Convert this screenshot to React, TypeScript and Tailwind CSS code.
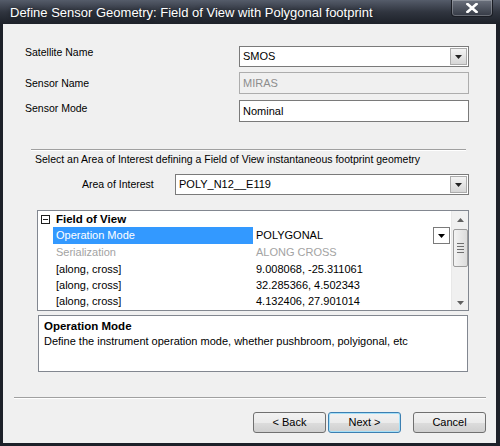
import React from 'react';

const font = { fontFamily: '"Liberation Sans", Arial, sans-serif' };

const Arrow: React.FC<{ className?: string }> = ({ className }) => (
  <svg width="7" height="4" viewBox="0 0 7 4" className={className}>
    <path d="M0 0h7L3.5 4z" fill="currentColor" />
  </svg>
);

const Combo: React.FC<{ value: string; width: string }> = ({ value, width }) => (
  <div className={`${width} h-[21px] bg-white border border-[#7a7a7a] flex items-stretch`}>
    <div className="flex-1 pl-[3px] flex items-center text-[11px] text-black">{value}</div>
    <div className="w-[17px] m-[1px] border border-[#acacac] bg-gradient-to-b from-[#f4f4f4] to-[#d6d6d6] flex items-center justify-center text-[#222]">
      <Arrow />
    </div>
  </div>
);

const Separator: React.FC<{ className: string }> = ({ className }) => (
  <div className={`${className} h-[2px] flex flex-col`}>
    <div className="h-[1px] bg-[#a0a0a0]" />
    <div className="h-[1px] bg-white" />
  </div>
);

const WinButton: React.FC<{ label: string; isDefault?: boolean }> = ({ label, isDefault }) => (
  <div
    className={`w-[73px] h-[21px] rounded-[3px] border ${
      isDefault ? 'border-[#3c7fb1] shadow-[inset_0_0_0_1px_#a6e0f8]' : 'border-[#707070]'
    } bg-[linear-gradient(#f2f2f2_0%,#ebebeb_50%,#dddddd_50%,#cfcfcf_100%)] flex items-center justify-center text-[11px] text-black`}
  >
    {label}
  </div>
);

const rows = [
  { label: 'Serialization', value: 'ALONG CROSS', disabled: true },
  { label: '[along, cross]', value: '9.008068, -25.311061' },
  { label: '[along, cross]', value: '32.285366, 4.502343' },
  { label: '[along, cross]', value: '4.132406, 27.901014' },
];

export default function App() {
  return (
    <div className="w-[500px] h-[446px] bg-[#1d2129] flex flex-col overflow-hidden" style={font}>
      {/* Title bar */}
      <div className="h-[24px] flex items-start justify-between bg-gradient-to-b from-[#555c6a] via-[#30353f] to-[#1d2129]">
        <div className="pl-[10px] pt-[5px] text-[13px] leading-[15px] text-white [text-shadow:0_0_4px_rgba(0,0,0,0.6)]">
          Define Sensor Geometry: Field of View with Polygonal footprint
        </div>
        <div className="mr-[7px] w-[42px] h-[17px] rounded-b-[4px] border border-t-0 border-[#1a1d24] bg-gradient-to-b from-[#6b717d] to-[#353a45] shadow-[inset_0_0_0_1px_rgba(255,255,255,0.25)] flex items-center justify-center">
          <svg width="12" height="10" viewBox="0 0 12 10">
            <path d="M1.5 1 10.5 9M10.5 1 1.5 9" stroke="white" strokeWidth="2.6" strokeLinecap="square" />
          </svg>
        </div>
      </div>

      {/* Client area */}
      <div className="flex-1 ml-[3px] mr-[4px] mb-[3px] bg-[#f0f0f0] flex flex-col text-[11px] leading-[13px] text-black">
        <div className="mt-[22px] flex items-start text-[10.5px]">
          <div className="ml-[22px] w-[214px]">Satellite Name</div>
          <Combo value="SMOS" width="w-[230px]" />
        </div>

        <div className="mt-[5px] flex items-start">
          <div className="ml-[22px] w-[214px] pt-[5px] text-[10.5px]">Sensor Name</div>
          <div className="w-[230px] h-[22px] border border-[#adadad] bg-[#f0f0f0] pl-[3px] flex items-center text-[#8d8d8d]">MIRAS</div>
        </div>

        <div className="mt-[6px] flex items-start">
          <div className="ml-[22px] w-[214px] pt-[2px] text-[10.5px]">Sensor Mode</div>
          <div className="w-[230px] h-[22px] border border-[#7a7a7a] bg-white pl-[3px] flex items-center">Nominal</div>
        </div>

        <Separator className="mt-[27px] ml-[28px] w-[435px]" />

        <div className="mt-[2px] ml-[32px] text-[10.5px]">Select an Area of Interest defining a Field of View instantaneous footprint geometry</div>

        <div className="mt-[8px] flex items-center">
          <div className="ml-[79px] w-[93px] text-[10.5px]">Area of Interest</div>
          <Combo value="POLY_N12__E119" width="w-[294px]" />
        </div>

        {/* Property grid */}
        <div className="mt-[15px] ml-[34px] w-[432px] h-[101px] border border-[#828790] bg-white flex overflow-hidden">
          <div className="flex-1 flex flex-col">
            <div className="h-[17px] flex items-center">
              <div className="ml-[3px] w-[9px] h-[9px] border border-[#1e1e1e] flex items-center justify-center">
                <div className="w-[5px] h-[1px] bg-[#1e1e1e]" />
              </div>
              <div className="ml-[6px] font-bold text-[11.5px]">Field of View</div>
            </div>
            <div className="h-[17px] flex items-stretch">
              <div className="ml-[15px] w-[200px] bg-[#3399ff] text-white pl-[3px] flex items-center">Operation Mode</div>
              <div className="flex-1 pl-[3px] flex items-center justify-between">
                <span>POLYGONAL</span>
                <div className="w-[17px] h-[17px] border border-[#7a7a7a] bg-white flex items-center justify-center mr-[1px]">
                  <Arrow />
                </div>
              </div>
            </div>
            {rows.map((r, i) => (
              <div key={i} className={`h-[17px] flex items-center ${r.disabled ? 'text-[#a3a3a3]' : ''}`}>
                <div className="ml-[15px] w-[200px] pl-[3px]">{r.label}</div>
                <div className="flex-1 pl-[3px]">{r.value}</div>
              </div>
            ))}
          </div>
          {/* Scrollbar */}
          <div className="w-[17px] bg-[#f0f0f0] border-l border-[#e8e8e8] flex flex-col items-center">
            <div className="h-[17px] flex items-center justify-center text-[#606060]">
              <Arrow className="rotate-180" />
            </div>
            <div className="mt-[1px] w-[15px] h-[38px] rounded-[2px] border border-[#9a9a9a] bg-gradient-to-r from-[#f3f3f3] to-[#dcdcdc] flex flex-col items-center justify-center gap-[2px]">
              <div className="w-[7px] h-[1px] bg-[#6e6e6e]" />
              <div className="w-[7px] h-[1px] bg-[#6e6e6e]" />
              <div className="w-[7px] h-[1px] bg-[#6e6e6e]" />
              <div className="w-[7px] h-[1px] bg-[#6e6e6e]" />
            </div>
            <div className="flex-1" />
            <div className="h-[15px] flex items-center justify-center text-[#606060]">
              <Arrow />
            </div>
          </div>
        </div>

        {/* Description */}
        <div className="mt-[4px] ml-[35px] w-[430px] h-[57px] border border-[#828790] bg-white px-[5px] pt-[3px]">
          <div className="font-bold text-[11.5px] leading-[14px]">Operation Mode</div>
          <div className="mt-[2px]">Define the instrument operation mode, whether pushbroom, polyigonal, etc</div>
        </div>

        <Separator className="mt-[25px] ml-[11px] w-[472px]" />

        <div className="mt-[13px] flex">
          <div className="ml-[250px]"><WinButton label="< Back" /></div>
          <div className="ml-[2px]"><WinButton label="Next >" isDefault /></div>
          <div className="ml-[12px]"><WinButton label="Cancel" /></div>
        </div>
      </div>
    </div>
  );
}
